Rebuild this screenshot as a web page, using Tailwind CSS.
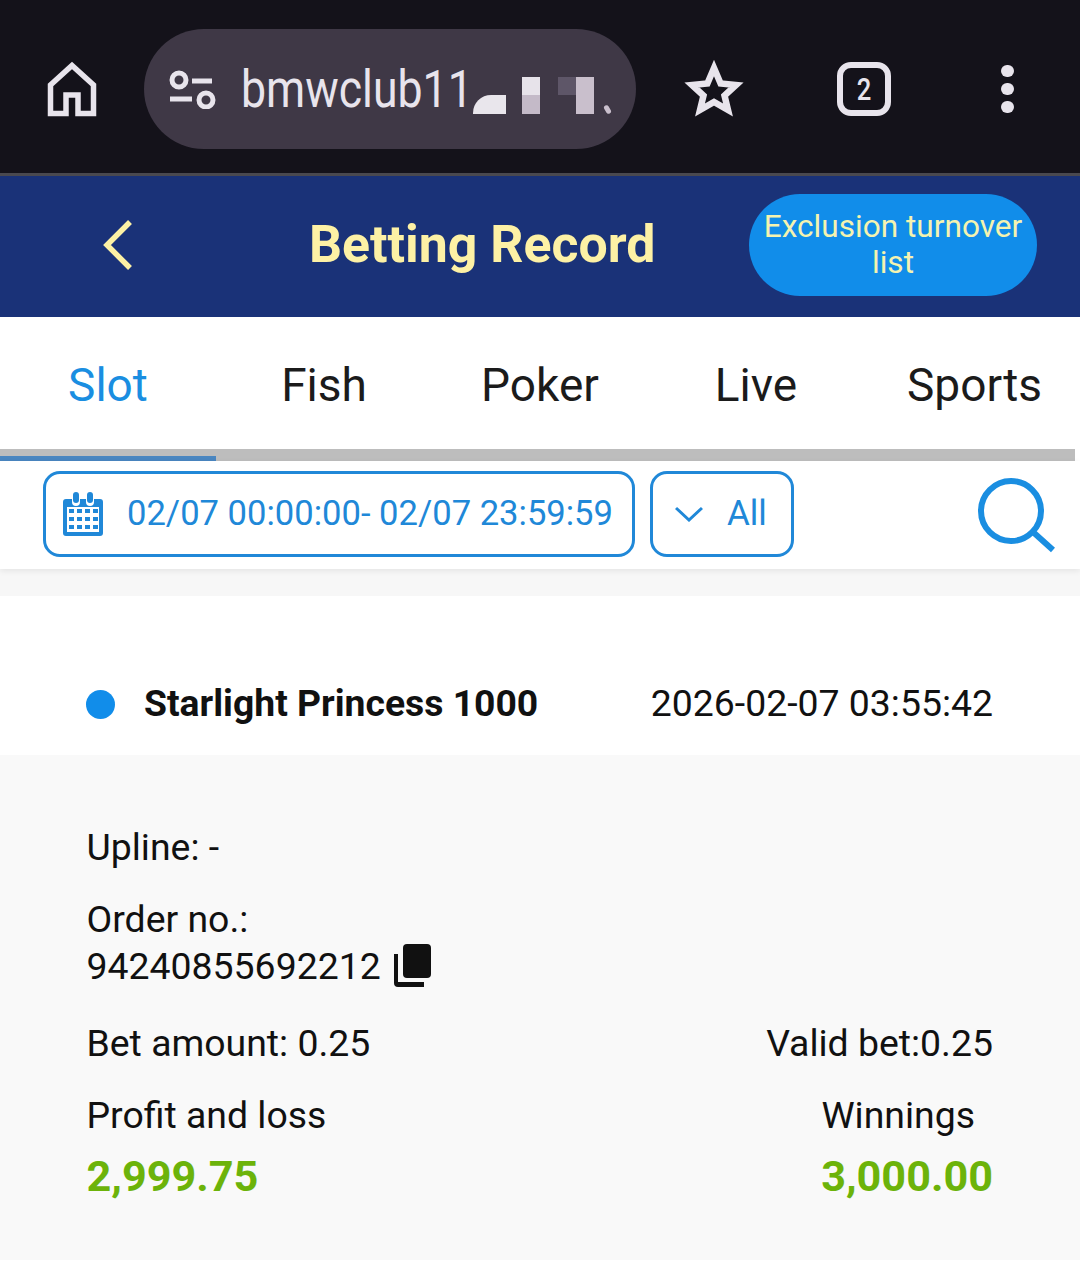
<!doctype html>
<html>
<head>
<meta charset="utf-8">
<script src="https://cdn.jsdelivr.net/npm/@tailwindcss/browser@4"></script>
</head>
<body class="w-[1080px] h-[1286px] overflow-hidden bg-white font-['Roboto',sans-serif]">
<div class="h-[176px] bg-[#14121a] border-b-[3px] border-[#4a494f] flex items-start relative">
  <svg class="absolute left-[46px] top-[61px]" width="52" height="56" viewBox="0 0 52 56" fill="none" stroke="#e8e4ec" stroke-width="5.500"><path d="M4.500 52.500V24L26 4.500L47.500 24V52.500H32V34H20V52.500Z" stroke-linejoin="miter"/></svg>
  <div class="absolute left-[144px] top-[29px] w-[492px] h-[120px] rounded-full bg-[#3f3846] overflow-hidden">
    <svg class="absolute left-[24px] top-[40px]" width="48" height="40" viewBox="0 0 48 40" fill="none" stroke="#e8e4ec" stroke-width="5"><circle cx="11" cy="11" r="7"/><path d="M24 12H44"/><path d="M2 30H24"/><circle cx="38" cy="31" r="7"/></svg>
    <span class="absolute left-[97px] top-[31px] text-[#e8e4ec] text-[51px] leading-[60px] scale-x-[0.875] origin-left whitespace-nowrap">bmwclub11</span>
    <div class="absolute left-[329px] top-[66px] w-[33px] h-[19px] bg-[#e9e6ec] rounded-tl-[18px]"></div>
    <div class="absolute left-[378px] top-[48px] w-[18px] h-[18px] bg-[#e7e3ea]"></div>
    <div class="absolute left-[378px] top-[66px] w-[18px] h-[19px] bg-[#c4bac8]"></div>
    <div class="absolute left-[414px] top-[48px] w-[18px] h-[18px] bg-[#5e5668]"></div>
    <div class="absolute left-[432px] top-[48px] w-[18px] h-[37px] bg-[#c9bfcc]"></div>
    <div class="absolute left-[461px] top-[76px] w-[5px] h-[9px] bg-[#c9bfcc] rotate-[-30deg] rounded-full"></div>
  </div>
  <svg class="absolute left-[684px] top-[59px]" width="60" height="58" viewBox="0 0 60 58" fill="none" stroke="#e8e4ec" stroke-width="6.5"><path d="M30 9L36.6 24.5L52 26L40.5 36.5L44 51L30 43L16 51L19.500 36.500L8 26L23.400 24.500Z" stroke-linejoin="miter"/></svg>
  <div class="absolute left-[837px] top-[62px] w-[54px] h-[54px] rounded-[14px] border-[6px] border-[#e8e4ec] flex items-center justify-center text-[#e8e4ec] text-[32px] font-medium leading-none"><span class="scale-x-[0.8]">2</span></div>
  <div class="absolute left-[1001px] top-[65px] flex flex-col gap-[6px]">
    <div class="w-[13px] h-[12px] rounded-full bg-[#e8e4ec]"></div>
    <div class="w-[13px] h-[12px] rounded-full bg-[#e8e4ec]"></div>
    <div class="w-[13px] h-[12px] rounded-full bg-[#e8e4ec]"></div>
  </div>
</div>
<header class="h-[141px] bg-[#1a3278] relative flex items-center">
  <svg class="absolute left-[100px] top-[43px]" width="36" height="52" viewBox="0 0 36 52" fill="none" stroke="#fdf1a5" stroke-width="5.500"><path d="M30 3L7 26L30 49"/></svg>
  <h1 class="absolute left-[309px] top-[39px] text-[#fdf1a5] text-[51.8px] leading-[60px] font-bold">Betting Record</h1>
  <button class="absolute left-[749px] top-[18px] w-[288px] h-[102px] rounded-full bg-[#118dea] text-[#f4f3b0] text-[31.6px] leading-[36px] text-center">Exclusion turnover<br>list</button>
</header>
<nav class="h-[132px] flex text-[46px] leading-[54px] text-[#1b1b1b]">
  <div class="w-[216px] pt-[41px] text-center text-[#1a8ee1]">Slot</div>
  <div class="w-[216px] pt-[41px] text-center">Fish</div>
  <div class="w-[216px] pt-[41px] text-center">Poker</div>
  <div class="w-[216px] pt-[41px] text-center">Live</div>
  <div class="w-[216px] pt-[41px] pl-[5px] text-center">Sports</div>
</nav>
<div class="w-[1075px] h-[12px] bg-[#bdbdbd] flex items-end"><div class="w-[216px] h-[5px] bg-[#4a86c0]"></div></div>
<div class="h-[108px] bg-white shadow-[0_2px_6px_rgba(0,0,0,0.08)] relative z-10 flex items-start pt-[10px] pl-[43px]">
  <div class="w-[592px] h-[86px] rounded-[17px] border-[3px] border-[#2088d8] flex items-center pl-[17px] text-[#2088d8] text-[34.6px] leading-[42px]">
    <svg class="mr-[24px] shrink-0" width="40" height="44" viewBox="0 0 40 44" fill="#2088d8">
      <path d="M3 7H9V10A4 4 0 0 0 17 10V7H23V10A4 4 0 0 0 31 10V7H37A3 3 0 0 1 40 10V41A3 3 0 0 1 37 44H3A3 3 0 0 1 0 41V10A3 3 0 0 1 3 7Z"/>
      <rect x="10" y="0" width="6" height="11" rx="3"/><rect x="24" y="0" width="6" height="11" rx="3"/>
      <rect x="4" y="15" width="32" height="25" fill="#fff"/>
      <g><rect x="6" y="17" width="5" height="4"/><rect x="14" y="17" width="5" height="4"/><rect x="22" y="17" width="5" height="4"/><rect x="30" y="17" width="5" height="4"/><rect x="6" y="25" width="5" height="4"/><rect x="14" y="25" width="5" height="4"/><rect x="22" y="25" width="5" height="4"/><rect x="30" y="25" width="5" height="4"/><rect x="6" y="33" width="5" height="4"/><rect x="14" y="33" width="5" height="4"/><rect x="22" y="33" width="5" height="4"/><rect x="30" y="33" width="5" height="4"/></g>
    </svg>
    <span class="whitespace-nowrap pb-[2px]">02/07 00:00:00- 02/07 23:59:59</span>
  </div>
  <div class="ml-[15px] w-[144px] h-[86px] rounded-[17px] border-[3px] border-[#2088d8] flex items-center pl-[22px] text-[#2088d8] text-[35px] leading-[42px]">
    <svg class="mr-[24px]" width="28" height="16" viewBox="0 0 28 16" fill="none" stroke="#2088d8" stroke-width="3"><path d="M1 2L14 14L27 2"/></svg>
    <span>All</span>
  </div>
  <svg class="absolute left-[977px] top-[17px]" width="80" height="76" viewBox="0 0 80 76" fill="none" stroke="#1a8ee1" stroke-width="6"><circle cx="34" cy="33" r="30"/><path d="M56 54L76 72"/></svg>
</div>
<div class="h-[27px] bg-[#f7f7f7]"></div>
<div class="h-[159px] relative flex items-start pt-[84px] pl-[86px] pr-[87px]">
  <div class="w-[29px] h-[29px] rounded-full bg-[#118dea] mt-[10px] mr-[29px] shrink-0"></div>
  <div class="font-bold text-[37.3px] leading-[46px] text-[#111]">Starlight Princess 1000</div>
  <div class="ml-auto text-[37.4px] leading-[46px] text-[#111]">2026-02-07 03:55:42</div>
</div>
<section class="h-[505px] bg-[#f9f9f9] pl-[86.5px] pr-[87px] pt-[69px] text-[37.4px] leading-[46px] text-[#111]">
  <div>Upline: -</div>
  <div class="mt-[26px]">Order no.:</div>
  <div class="flex items-center mt-[1px]">94240855692212
    <svg class="ml-[13px]" width="38" height="44" viewBox="0 0 38 44" fill="#111"><rect x="9" y="0" width="28" height="34" rx="4"/><path d="M0 10H4V38H30V43H4A4 4 0 0 1 0 39Z"/></svg>
  </div>
  <div class="flex justify-between mt-[31px]"><span>Bet amount: 0.25</span><span>Valid bet:0.25</span></div>
  <div class="flex justify-between mt-[26px]"><span>Profit and loss</span><span class="mr-[18px]">Winnings</span></div>
  <div class="flex justify-between mt-[16px] font-bold text-[43.2px] leading-[46px] text-[#6cb30a]"><span>2,999.75</span><span>3,000.00</span></div>
</section>
</body>
</html>
